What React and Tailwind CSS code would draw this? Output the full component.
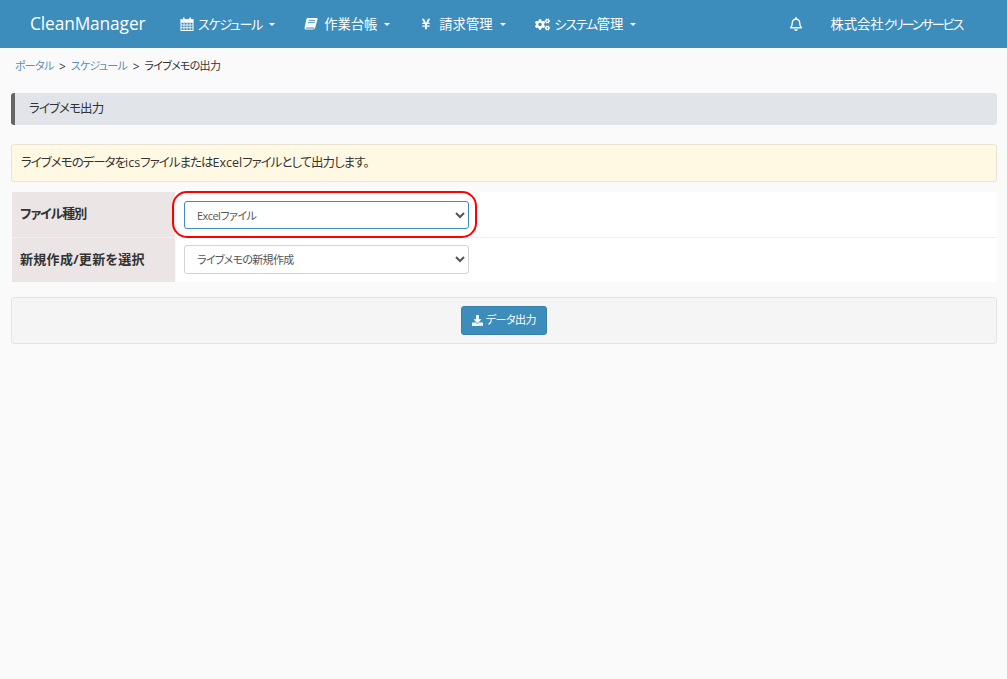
import { FaCogs, FaRegBell, FaDownload, FaYenSign } from "react-icons/fa";

const FONT = "font-['Open_Sans','Noto_Sans_CJK_JP',sans-serif] [font-feature-settings:'palt'] whitespace-nowrap";
const KANA = "text-[13px] tracking-[-1.25px]";

function CalendarIcon() {
  return (
    <svg viewBox="0 0 14 14" className="w-[14px] h-[14px]" fill="none" stroke="currentColor">
      <rect x="1" y="2.5" width="12" height="11" strokeWidth="1" />
      <path d="M1 3h12v2.5H1z" fill="currentColor" strokeWidth="0.5" />
      <path d="M3.8 0.5v3M10.2 0.5v3" strokeWidth="1.6" />
      <path d="M4 5.5v8M7 5.5v8M10 5.5v8M1 8h12M1 10.7h12" strokeWidth="0.8" />
    </svg>
  );
}

function BookIcon() {
  return (
    <svg viewBox="0 0 14 14" className="w-[14px] h-[14px]" fill="currentColor">
      <path d="M3.6 1h8.9c.9 0 1.3.6 1 1.4l-2.3 8.4c-.3 1-1.1 1.7-2.2 1.7H2.2C1 12.5.3 11.5.6 10.4L2.4 2.2C2.6 1.5 3 1 3.6 1z" />
      <path d="M4.6 3.4h6.6M4 5.4h6.6" stroke="#3c8dbc" strokeWidth="0.9" />
      <path d="M2 10.6h8.4l-.3 1H2.2z" fill="#3c8dbc" />
    </svg>
  );
}

function Caret() {
  return <span className="ml-[7px] w-0 h-0 border-x-[3px] border-x-transparent border-t-[3.5px] border-t-white" />;
}

function NavItem({ icon, iconClass, children, className }) {
  return (
    <a className={"flex items-center h-full shrink-0 text-white text-[13.3px] " + className}>
      <span className={"flex justify-center " + iconClass}>{icon}</span>
      <span className="pt-[1px]">{children}</span>
      <Caret />
    </a>
  );
}

function FormRow({ label, labelClass, children, className }) {
  return (
    <div className={"flex " + className}>
      <div className={"w-[163px] mr-px bg-[#ece5e5] pl-[8px] flex items-center pb-[1px] text-[13px] font-bold text-[#333] " + labelClass}>
        {label}
      </div>
      <div className="flex-1 bg-white pl-[8px] flex items-center">{children}</div>
    </div>
  );
}

export default function App() {
  return (
    <div className={"min-h-[679px] bg-[#fafafa] text-[#333] " + FONT}>
      {/* NAVBAR */}
      <nav className="h-[48px] bg-[#3c8dbc] flex items-center pl-[30px]">
        <span className="text-white text-[17.3px] w-[150px] shrink-0 leading-none tracking-[-0.1px]">CleanManager</span>
        <NavItem icon={<CalendarIcon />} iconClass="w-[14px] mr-[4px]" className="mr-[29px]">
          <span className={KANA}>スケジュール</span>
        </NavItem>
        <NavItem icon={<BookIcon />} iconClass="w-[14px] mr-[6px]" className="mr-[31px]">
          作業台帳
        </NavItem>
        <NavItem icon={<FaYenSign size={12} />} iconClass="w-[10px] mr-[8px]" className="mr-[29px]">
          請求管理
        </NavItem>
        <NavItem icon={<FaCogs size={15} />} iconClass="w-[15px] mr-[5px]">
          <span className={KANA}>システム</span>管理
        </NavItem>
        <FaRegBell size={14} className="text-white ml-[153px] shrink-0" />
        <span className="text-white text-[13.3px] ml-[27px] pt-[1px]">
          株式会社<span className="text-[13px] tracking-[-2px]">クリーンサービス</span>
        </span>
      </nav>

      {/* BREADCRUMB */}
      <div className="h-[45px] pl-[15px] flex items-center text-[11px] tracking-[-0.7px] pb-[10px] pt-[2px]">
        <a className="text-[#5a8fb8]">ポータル</a>
        <span className="mx-[5.5px] text-[12px]">&gt;</span>
        <a className="text-[#5a8fb8]">スケジュール</a>
        <span className="mx-[5.5px] text-[12px]">&gt;</span>
        <span>ライブメモの出力</span>
      </div>

      <main className="px-[11px] pr-[10px]">
        {/* TITLE */}
        <div className="h-[32px] bg-[#e1e4e9] border-l-4 border-[#666] rounded-[3px] pl-[14px] pt-[1px] flex items-center text-[12.5px] tracking-[-0.9px]">
          ライブメモ出力
        </div>

        {/* ALERT */}
        <div className="mt-[19px] h-[38px] bg-[#fff8e3] border border-[#e8e4d6] rounded-[3px] pl-[9px] pt-[1px] flex items-center text-[12.5px] tracking-[-1px]">
          <span>ライブメモのデータを<span className="tracking-normal">ics</span>ファイルまたは<span className="tracking-normal">Excel</span>ファイルとして出力します。</span>
        </div>

        {/* FORM */}
        <div className="mt-[10px] pl-px">
          <FormRow label="ファイル種別" labelClass="tracking-[-1px]" className="h-[46px] border-b border-[#f0f0f0]">
            <div className="relative">
              <select className="block w-[285px] h-[28px] bg-white border border-[#3c8dbc] rounded-[3px] pl-[8px] pt-[1px] text-[11px] tracking-[-0.55px] text-[#555]">
                <option>Excelファイル</option>
              </select>
              {/* red annotation */}
              <div className="absolute -left-[12px] -top-[10px] w-[305px] h-[47px] border-[2px] border-[#f00] rounded-[15px]" />
            </div>
          </FormRow>
          <FormRow label="新規作成/更新を選択" labelClass="tracking-[0.3px]" className="h-[44px]">
            <select className="block mb-[1px] w-[285px] h-[29px] bg-white border border-[#ced4da] rounded-[3px] pl-[8px] text-[11px] tracking-[-0.7px] text-[#555]">
              <option>ライブメモの新規作成</option>
            </select>
          </FormRow>
        </div>

        {/* ACTIONS */}
        <div className="mt-[15px] h-[47px] bg-[#f5f5f5] border border-[#e3e3e3] rounded-[3px] flex items-center justify-center">
          <button className="w-[86px] h-[29px] bg-[#3c8dbc] border border-[#367fa9] rounded-[3px] text-white text-[11px] tracking-[-0.5px] flex items-center justify-center gap-[3px]">
            <FaDownload size={11} />
            データ出力
          </button>
        </div>
      </main>
    </div>
  );
}
